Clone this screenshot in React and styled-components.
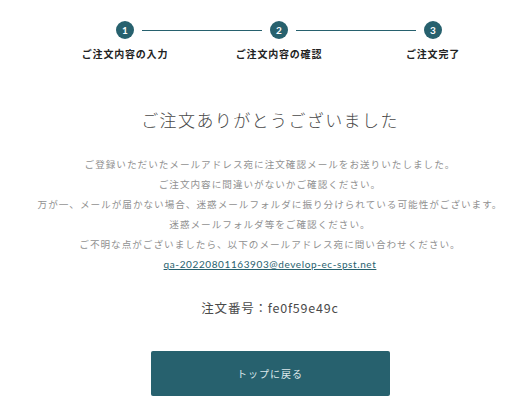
import React from 'react'
import styled, { createGlobalStyle } from 'styled-components'

const GlobalStyle = createGlobalStyle`
  body {
    margin: 0;
    background: #fff;
    font-family: "Noto Sans CJK JP", "Noto Sans", sans-serif;
  }
`

const steps = ['ご注文内容の入力', 'ご注文内容の確認', 'ご注文完了']

const messages = [
  'ご登録いただいたメールアドレス宛に注文確認メールをお送りいたしました。',
  'ご注文内容に間違いがないかご確認ください。',
  '万が一、メールが届かない場合、迷惑メールフォルダに振り分けられている可能性がございます。',
  '迷惑メールフォルダ等をご確認ください。',
  'ご不明な点がございましたら、以下のメールアドレス宛に問い合わせください。',
]

export default function App() {
  return (
    <>
      <GlobalStyle />
      <Page>
        <Steps>
          <StepTrack>
            {steps.map((s, i) => (
              <React.Fragment key={s}>
                {i > 0 && <StepLine />}
                <StepCircle>{i + 1}</StepCircle>
              </React.Fragment>
            ))}
          </StepTrack>
          <StepLabels>
            {steps.map((s) => (
              <StepLabel key={s}>{s}</StepLabel>
            ))}
          </StepLabels>
        </Steps>

        <Title>ご注文ありがとうございました</Title>

        <Message>
          {messages.map((m) => (
            <p key={m}>{m}</p>
          ))}
          <p>
            <MailLink href="#">qa-20220801163903@develop-ec-spst.net</MailLink>
          </p>
        </Message>

        <OrderNo>注文番号：fe0f59e49c</OrderNo>

        <TopButton>トップに戻る</TopButton>
      </Page>
    </>
  )
}

const Page = styled.div`
  width: 540px;
  display: flex;
  flex-direction: column;
  align-items: center;
  padding-top: 21px;
  box-sizing: border-box;
`

const Steps = styled.div`
  width: 462px;
  margin-left: 18px;
  display: flex;
  flex-direction: column;
  align-items: center;
`

const StepTrack = styled.div`
  width: 326px;
  display: flex;
  align-items: center;
`

const StepCircle = styled.div`
  width: 18px;
  height: 18px;
  border-radius: 50%;
  background: #27616e;
  color: #fff;
  font-family: "Lato", "Noto Sans", sans-serif;
  font-size: 10px;
  font-weight: 700;
  display: flex;
  align-items: center;
  justify-content: center;
  flex-shrink: 0;
`

const StepLine = styled.div`
  flex: 1;
  height: 1px;
  background: #27616e;
  margin: 0 8px;
`

const StepLabels = styled.div`
  width: 100%;
  display: grid;
  grid-template-columns: repeat(3, 1fr);
  margin-top: 9px;
`

const StepLabel = styled.div`
  text-align: center;
  font-size: 10px;
  line-height: 12px;
  font-weight: 700;
  letter-spacing: 0.8px;
  color: #222;
`

const Title = styled.h1`
  margin: 48px 0 0;
  font-size: 17px;
  line-height: 24px;
  font-weight: 300;
  letter-spacing: 1.4px;
  color: #484848;
`

const Message = styled.div`
  margin-top: 22px;
  text-align: center;
  font-size: 9.6px;
  letter-spacing: 1px;
  color: #919191;

  p {
    margin: 0;
    line-height: 20px;
    white-space: nowrap;
  }
`

const MailLink = styled.a`
  color: #27616e;
  text-decoration: underline;
  font-family: "Lato", "Noto Sans", sans-serif;
  font-size: 10px;
  letter-spacing: 0.6px;
`

const OrderNo = styled.div`
  margin-top: 25px;
  font-size: 12.5px;
  line-height: 18px;
  letter-spacing: 0.8px;
  color: #4a4a4a;
`

const TopButton = styled.button`
  margin-top: 34px;
  width: 239px;
  height: 45px;
  border: none;
  border-radius: 2px;
  background: #27616e;
  color: #dce8eb;
  font-family: "Noto Sans CJK JP", sans-serif;
  font-size: 10px;
  letter-spacing: 1px;
  cursor: pointer;
`
